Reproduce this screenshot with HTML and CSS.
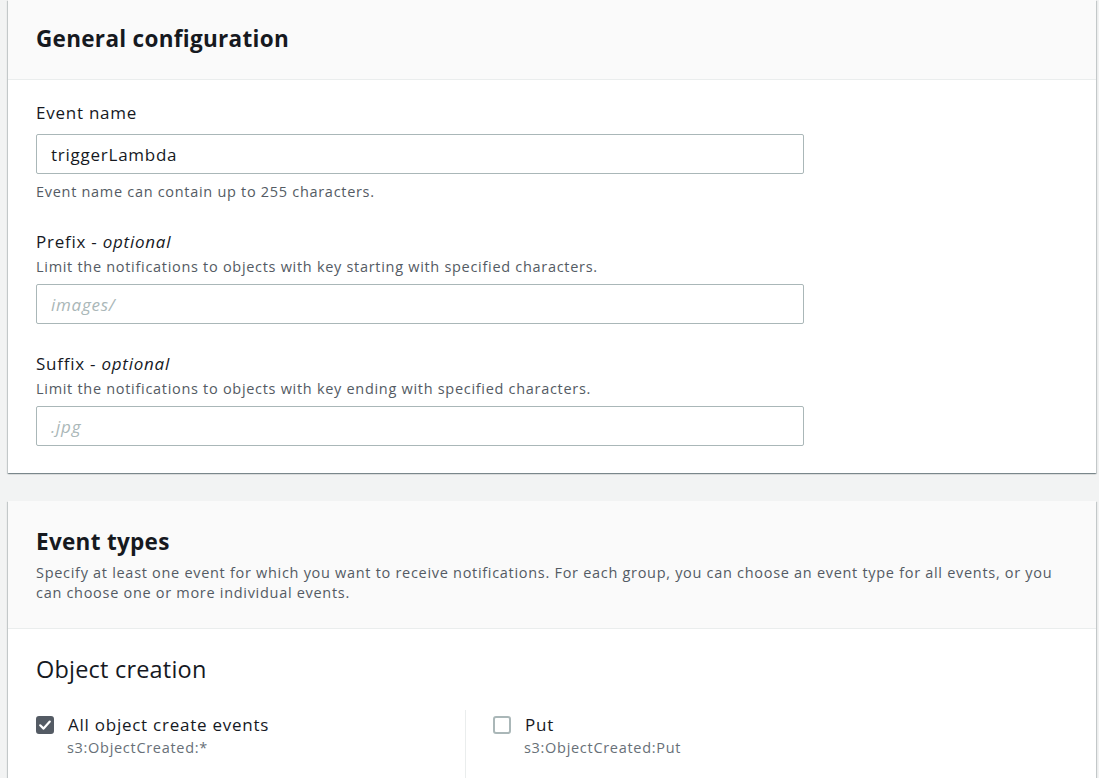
FILE: index.html
```html
<!DOCTYPE html>
<html lang="en">
<head>
<meta charset="utf-8">
<title>Event notification</title>
<link rel="stylesheet" href="styles.css">
</head>
<body>
<div class="page">
  <section class="card">
    <header class="card-header">
      <h2 class="card-title">General configuration</h2>
    </header>
    <div class="card-body">
      <div class="field">
        <label class="field-label">Event name</label>
        <div class="input"><span class="input-value">triggerLambda</span></div>
        <p class="field-hint">Event name can contain up to 255 characters.</p>
      </div>
      <div class="field">
        <label class="field-label">Prefix - <i>optional</i></label>
        <p class="field-desc">Limit the notifications to objects with key starting with specified characters.</p>
        <div class="input"><span class="input-placeholder">images/</span></div>
      </div>
      <div class="field">
        <label class="field-label">Suffix - <i>optional</i></label>
        <p class="field-desc">Limit the notifications to objects with key ending with specified characters.</p>
        <div class="input"><span class="input-placeholder">.jpg</span></div>
      </div>
    </div>
  </section>

  <section class="card card-second">
    <header class="card-header card-header-tall">
      <h2 class="card-title">Event types</h2>
      <p class="card-desc">Specify at least one event for which you want to receive notifications. For each group, you can choose an event type for all events, or you can choose one or more individual events.</p>
    </header>
    <div class="card-body card-body-events">
      <h3 class="group-title">Object creation</h3>
      <div class="options">
        <div class="option">
          <span class="checkbox checked">
            <svg viewBox="0 0 18 18" width="18" height="18"><path d="M4.2 9.3 L7.6 12.6 L13.8 5.6" fill="none" stroke="#fff" stroke-width="2.2" stroke-linecap="round" stroke-linejoin="round"/></svg>
          </span>
          <div class="option-text">
            <div class="option-label">All object create events</div>
            <div class="option-sub">s3:ObjectCreated:*</div>
          </div>
        </div>
        <div class="option option-divided">
          <span class="checkbox"></span>
          <div class="option-text">
            <div class="option-label">Put</div>
            <div class="option-sub">s3:ObjectCreated:Put</div>
          </div>
        </div>
      </div>
    </div>
  </section>
</div>
</body>
</html>
```
FILE: styles.css
```css
html, body {
  margin: 0;
  padding: 0;
  background: #f2f3f3;
  height: 100%;
  overflow: hidden;
}

body {
  font-family: "Open Sans", "Noto Sans", "Liberation Sans", sans-serif;
  color: #16191f;
}

.page {
  padding: 0 3px 0 8px;
}

.card {
  background: #ffffff;
  box-shadow: 0 1px 1px 0 rgba(0, 28, 36, 0.3), 1px 1px 1px 0 rgba(0, 28, 36, 0.15), -1px 1px 1px 0 rgba(0, 28, 36, 0.15);
}

.card-second {
  margin-top: 28px;
}

.card-header {
  background: #fafafa;
  border-bottom: 1px solid #eaeded;
  padding: 24px 28px 25px;
}

.card-header-tall {
  padding: 26px 28px 25px;
}

.card-title {
  margin: 0;
  font-size: 22.5px;
  line-height: 30px;
  font-weight: 700;
  letter-spacing: 0.3px;
}

.card-desc {
  margin: 6px 0 0;
  font-size: 14.5px;
  line-height: 20px;
  letter-spacing: 0.7px;
  color: #545b64;
}

.card-body {
  padding: 22px 28px 27px;
}

.field + .field {
  margin-top: 29px;
}

.field-label {
  display: block;
  font-size: 17px;
  line-height: 22px;
  letter-spacing: 0.75px;
}

.field-label i {
  font-style: italic;
}

.field-desc {
  margin: 4px 0 7px;
  font-size: 14.5px;
  line-height: 20px;
  letter-spacing: 0.7px;
  color: #545b64;
}

.field-hint {
  margin: 8px 0 0;
  font-size: 14.5px;
  line-height: 20px;
  letter-spacing: 0.7px;
  color: #545b64;
}

.field-label + .input {
  margin-top: 10px;
}

.input {
  width: 768px;
  height: 40px;
  box-sizing: border-box;
  border: 1px solid #aab7b8;
  border-radius: 2px;
  background: #fff;
  display: flex;
  align-items: center;
  padding: 0 14px;
  font-size: 17px;
  letter-spacing: 0.75px;
}

.input-value {
  color: #16191f;
}

.input-placeholder {
  color: #aab7b8;
  font-style: italic;
}

.card-body-events {
  padding: 25px 28px 40px;
}

.group-title {
  margin: 0;
  font-size: 23.5px;
  line-height: 30px;
  font-weight: 400;
  letter-spacing: 0.2px;
}

.options {
  display: grid;
  grid-template-columns: 429px 1fr;
  margin-top: 30px;
}

.option {
  display: flex;
  align-items: flex-start;
  gap: 14px;
}

.option-divided {
  border-left: 1px solid #eaeded;
  padding-left: 27px;
  margin-top: -4px;
  padding-top: 4px;
  padding-bottom: 40px;
}

.checkbox {
  flex: none;
  width: 18px;
  height: 18px;
  box-sizing: border-box;
  border: 2px solid #aab7b8;
  border-radius: 3px;
  background: #fff;
  margin-top: 2px;
  display: flex;
}

.checkbox.checked {
  background: #545b64;
  border-color: #545b64;
}

.checkbox.checked svg {
  margin: -2px;
}

.option-label {
  font-size: 17px;
  line-height: 22px;
  letter-spacing: 0.75px;
}

.option-sub {
  font-size: 14.5px;
  line-height: 18px;
  letter-spacing: 0.7px;
  color: #687078;
  margin-top: 3px;
  margin-left: -1px;
}
```
